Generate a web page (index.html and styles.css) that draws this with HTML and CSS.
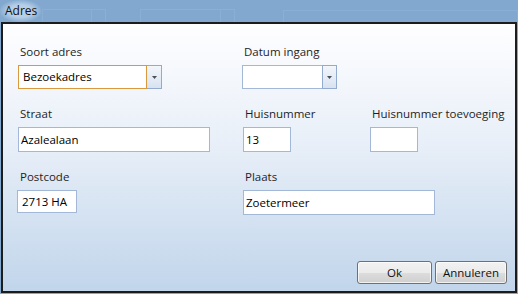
FILE: index.html
```html
<!DOCTYPE html>
<html lang="nl">
<head>
    <meta charset="UTF-8">
    <title>Adres</title>
    <link rel="stylesheet" href="styles.css">
</head>
<body>
    <!-- titelbalk -->
    <div class="header">
        <span class="title">Adres</span>
        <span class="ghost ghost-1"><i></i></span>
        <span class="ghost ghost-2"><i></i></span>
        <span class="ghost ghost-3"></span>
    </div>

    <!-- dialoog -->
    <div class="dialog">
        <div class="form">
            <div class="field">
                <label>Soort adres</label>
                <div class="combo combo-soort focus">
                    <span class="combo-text">Bezoekadres</span>
                    <span class="combo-btn"><svg width="5" height="3" viewBox="0 0 5 3"><path d="M0 0h5L2.5 3z" fill="#4a4f58"/></svg></span>
                </div>
            </div>
            <div class="field span-2">
                <label>Datum ingang</label>
                <div class="combo combo-datum">
                    <span class="combo-text"></span>
                    <span class="combo-btn"><svg width="5" height="3" viewBox="0 0 5 3"><path d="M0 0h5L2.5 3z" fill="#4a4f58"/></svg></span>
                </div>
            </div>

            <div class="field">
                <label>Straat</label>
                <div class="input w-straat">Azalealaan</div>
            </div>
            <div class="field shift">
                <label>Huisnummer</label>
                <div class="input w-nr">13</div>
            </div>
            <div class="field">
                <label>Huisnummer toevoeging</label>
                <div class="input w-nr"></div>
            </div>

            <div class="field">
                <label>Postcode</label>
                <div class="input w-postcode">2713 HA</div>
            </div>
            <div class="field shift span-2">
                <label>Plaats</label>
                <div class="input w-plaats">Zoetermeer</div>
            </div>
        </div>

        <div class="actions">
            <button class="btn btn-ok">Ok</button>
            <button class="btn btn-cancel">Annuleren</button>
        </div>
    </div>
</body>
</html>
```

FILE: styles.css
```css
/* basis */
* {
    margin: 0;
    padding: 0;
    box-sizing: border-box;
}

body {
    width: 518px;
    height: 294px;
    overflow: hidden;
    background: #82a8cf;
    font-family: "Open Sans", "Noto Sans", sans-serif;
    font-size: 11.5px;
    color: #1e1e1e;
}

/* titelbalk */
.header {
    height: 22px;
    display: flex;
    align-items: flex-end;
}

.title {
    align-self: stretch;
    display: flex;
    align-items: center;
    padding: 0 4px 2px 5px;
    font-size: 12px;
    color: #111;
    background: radial-gradient(ellipse at center, rgba(200, 220, 240, 0.75) 40%, rgba(130, 168, 207, 0) 75%);
}

.ghost {
    height: 13px;
    border: 1px solid #8aafd5;
    border-bottom: none;
    display: flex;
    justify-content: flex-end;
}

.ghost i {
    width: 14px;
    border-left: 1px solid #8aafd5;
}

.ghost-1 { width: 64px; margin-left: 1px; }
.ghost-2 { width: 96px; margin-left: 34px; }
.ghost-3 { width: 236px; margin-left: 48px; height: 12px; }

/* dialoog */
.dialog {
    margin: 0 1px;
    height: 271px;
    border: 2px solid #1c1c1c;
    background: linear-gradient(to bottom, #fefeff 0%, #e8eff8 45%, #c1d5eb 100%);
    display: flex;
    flex-direction: column;
    padding: 20px 8px 7px 15px;
}

.form {
    display: grid;
    grid-template-columns: 224px 128px 1fr;
    row-gap: 17px;
}

.field {
    display: flex;
    flex-direction: column;
    align-items: flex-start;
}

.field.span-2 { grid-column: span 2; }
.field.shift { padding-left: 1px; }

.field label {
    height: 16px;
    line-height: 16px;
    padding-left: 2px;
    margin-bottom: 5px;
    white-space: nowrap;
}

/* invoervelden */
.input {
    height: 25px;
    border: 1px solid #a2b8d6;
    background: #fff;
    color: #000;
    line-height: 23px;
    padding-left: 2px;
    white-space: nowrap;
}

.w-straat { width: 192px; }
.w-nr { width: 48px; }
.w-postcode { width: 60px; height: 23px; line-height: 21px; margin-left: -1px; padding-left: 4px; }
.w-plaats { width: 192px; }

/* keuzelijsten */
.combo {
    height: 24px;
    display: flex;
}

.combo-soort { width: 144px; }
.combo-datum { width: 95px; }

.combo-text {
    flex: 1;
    border: 1px solid #a2b8d6;
    border-right: none;
    background: #fff;
    color: #000;
    line-height: 22px;
    padding-left: 4px;
}

.combo.focus .combo-text {
    border-color: #d99a3e;
    border-right: 1px solid #d99a3e;
}

.combo-btn {
    width: 15px;
    border: 1px solid #92abcf;
    background: linear-gradient(to bottom, #f3f6fb, #d8e3f1);
    display: flex;
    align-items: center;
    justify-content: center;
}

.combo.focus .combo-btn { border-left: none; }

/* knoppen */
.actions {
    margin-top: auto;
    display: flex;
    justify-content: flex-end;
    gap: 3px;
}

.btn {
    height: 23px;
    border: 1px solid #707070;
    border-radius: 3px;
    background: linear-gradient(to bottom, #f2f2f2 0%, #ebebeb 50%, #dddddd 51%, #cfcfcf 100%);
    font-family: inherit;
    font-size: 11.5px;
    color: #111;
    box-shadow: inset 0 0 0 1px rgba(255, 255, 255, 0.7);
}

.btn-ok { width: 75px; }
.btn-cancel { width: 72px; }
```
